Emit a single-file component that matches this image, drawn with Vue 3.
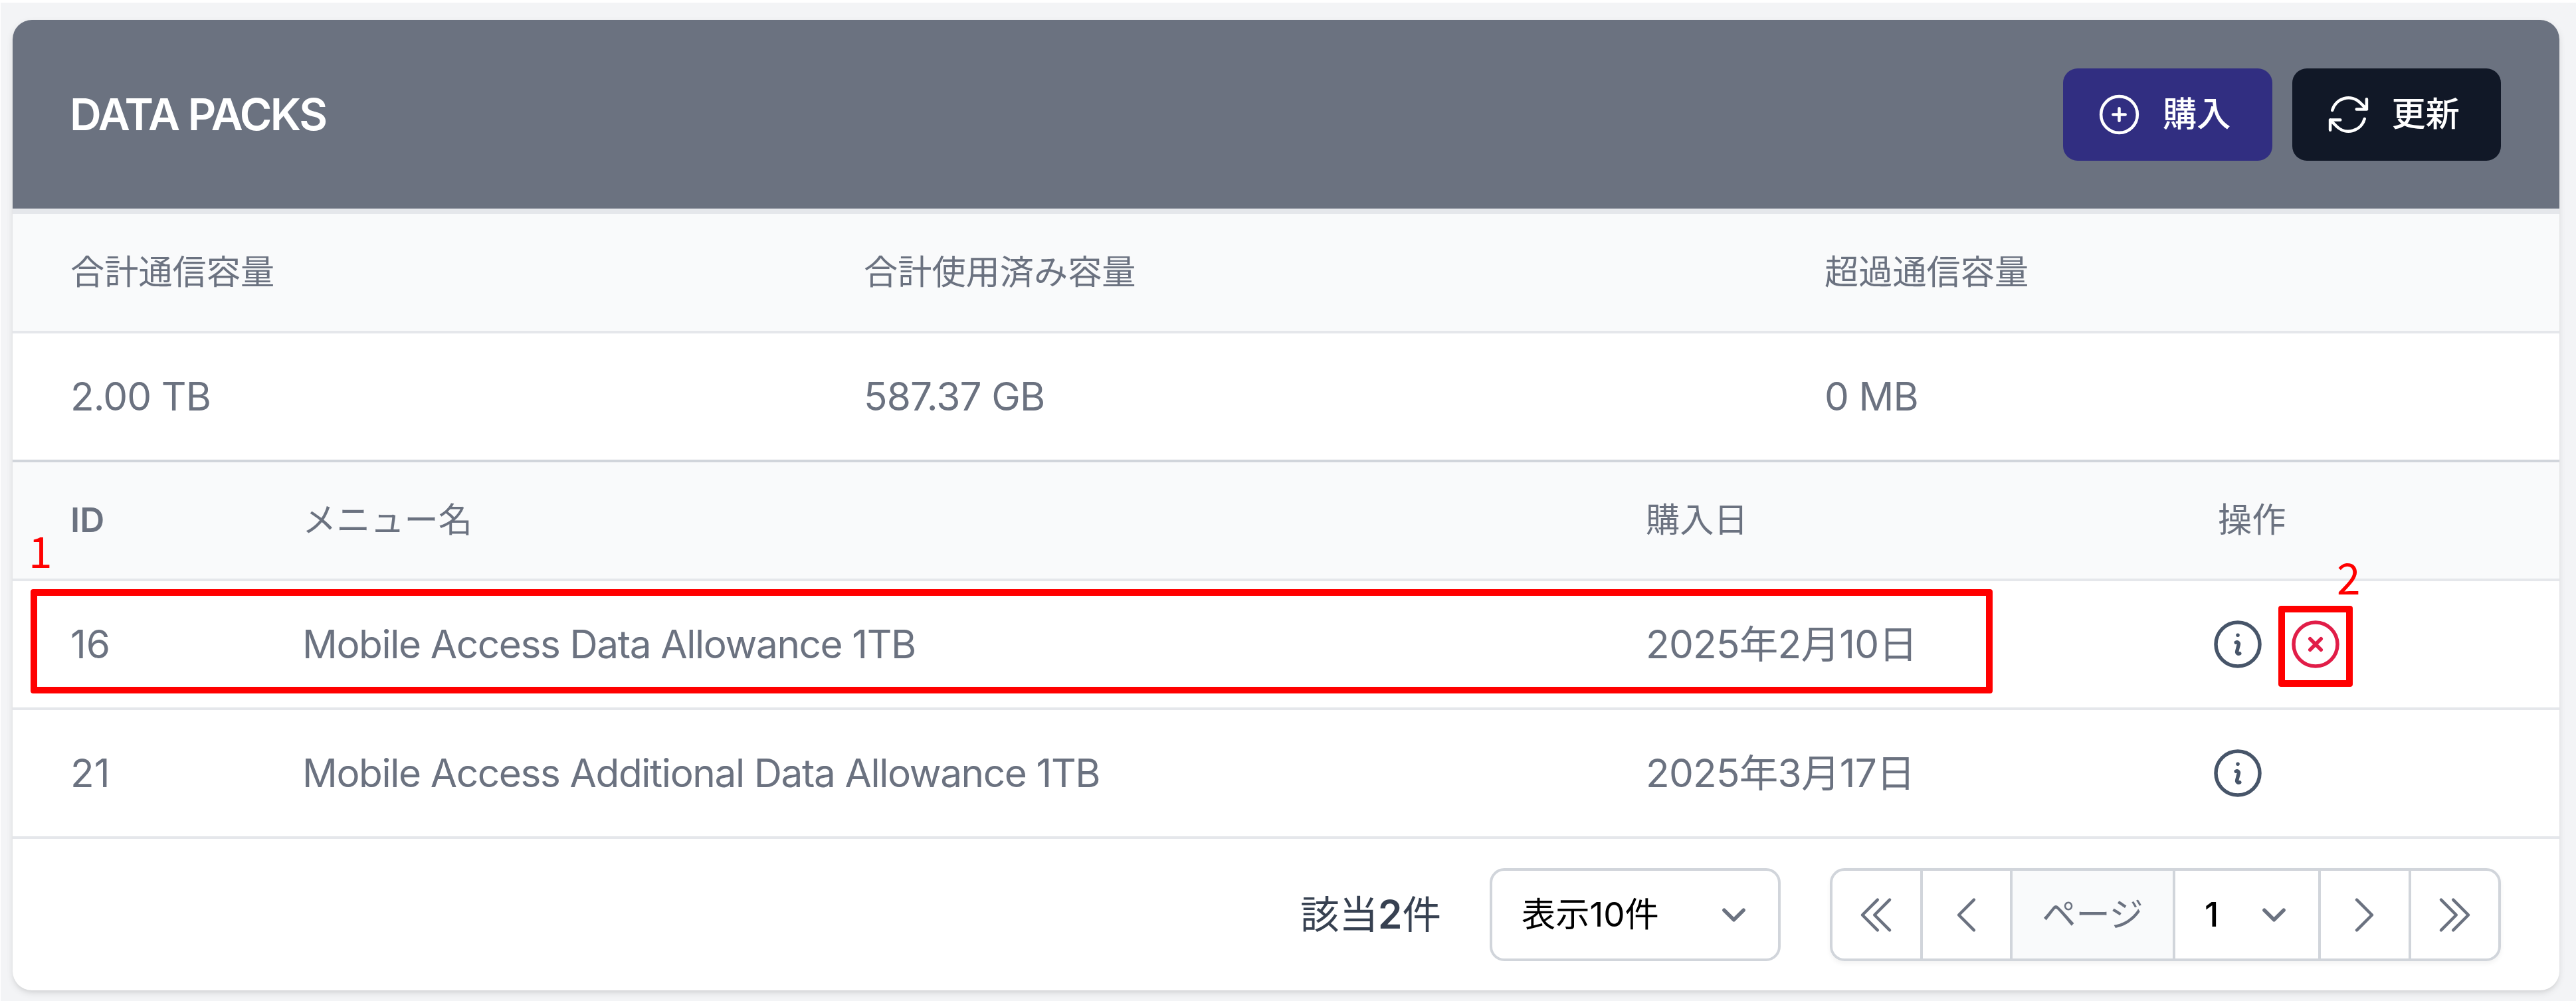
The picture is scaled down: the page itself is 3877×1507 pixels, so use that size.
<template>
  <div class="page">
    <div class="card">
      <!-- ヘッダー -->
      <div class="card-header">
        <h2 class="title">DATA PACKS</h2>
        <div class="actions">
          <button class="btn btn-buy">
            <svg class="btn-icon" viewBox="0 0 24 24"><path :d="icons.plus" /></svg>
            <span>購入</span>
          </button>
          <button class="btn btn-refresh">
            <svg class="btn-icon" viewBox="0 0 24 24"><path :d="icons.refresh" /></svg>
            <span>更新</span>
          </button>
        </div>
      </div>

      <!-- 通信容量の合計 -->
      <div class="row summary head">
        <div v-for="item in summary" :key="item.label">{{ item.label }}</div>
      </div>
      <div class="row summary body summary-last">
        <div v-for="item in summary" :key="item.label">{{ item.value }}</div>
      </div>

      <!-- データパック一覧 -->
      <div class="row packs head">
        <div class="latin">ID</div>
        <div>メニュー名</div>
        <div>購入日</div>
        <div>操作</div>
      </div>
      <div class="row packs body" v-for="pack in packs" :key="pack.id">
        <div class="pack-id">{{ pack.id }}</div>
        <div class="menu-name">{{ pack.name }}</div>
        <div class="date">{{ pack.date }}</div>
        <div class="ops">
          <svg class="op-icon" viewBox="0 0 24 24"><path :d="icons.info" /></svg>
          <svg v-if="pack.cancelable" class="op-icon op-cancel" viewBox="0 0 24 24"><path :d="icons.cancel" /></svg>
        </div>
      </div>

      <!-- ページネーション -->
      <div class="card-footer">
        <div class="total">該当<b>{{ packs.length }}</b>件</div>
        <div class="select per-page">
          <span>表示10件</span>
          <svg class="caret" viewBox="0 0 20 20"><path d="M6 8l4 4 4-4" /></svg>
        </div>
        <div class="pager">
          <div class="cell nav"><svg class="chevron" viewBox="0 0 24 24"><path :d="icons.first" /></svg></div>
          <div class="cell nav"><svg class="chevron" viewBox="0 0 24 24"><path :d="icons.prev" /></svg></div>
          <div class="cell page-label">ページ</div>
          <div class="cell page-select">
            <span>1</span>
            <svg class="caret" viewBox="0 0 20 20"><path d="M6 8l4 4 4-4" /></svg>
          </div>
          <div class="cell nav"><svg class="chevron" viewBox="0 0 24 24"><path :d="icons.next" /></svg></div>
          <div class="cell nav"><svg class="chevron" viewBox="0 0 24 24"><path :d="icons.last" /></svg></div>
        </div>
      </div>
    </div>

    <!-- 説明用の赤枠と番号 -->
    <div class="mark mark-row"></div>
    <div class="mark mark-cancel"></div>
    <div class="mark-no no-1">1</div>
    <div class="mark-no no-2">2</div>
  </div>
</template>

<script setup>
import { ref } from 'vue'

const summary = ref([
  { label: '合計通信容量', value: '2.00 TB' },
  { label: '合計使用済み容量', value: '587.37 GB' },
  { label: '超過通信容量', value: '0 MB' }
])

const packs = ref([
  { id: 16, name: 'Mobile Access Data Allowance 1TB', date: '2025年2月10日', cancelable: true },
  { id: 21, name: 'Mobile Access Additional Data Allowance 1TB', date: '2025年3月17日', cancelable: false }
])

// アイコンのパス（24x24、線のみ）
const icons = {
  plus: 'M12 9v6m3-3H9m12 0a9 9 0 1 1-18 0 9 9 0 0 1 18 0Z',
  refresh: 'M16.023 9.348h4.992v-.001M2.985 19.644v-4.992m0 0h4.992m-4.993 0 3.181 3.183a8.25 8.25 0 0 0 13.803-3.7M4.031 9.865a8.25 8.25 0 0 1 13.803-3.7l3.181 3.182m0-4.991v4.99',
  info: 'm11.25 11.25.041-.02a.75.75 0 0 1 1.063.852l-.708 2.836a.75.75 0 0 0 1.063.853l.041-.021M21 12a9 9 0 1 1-18 0 9 9 0 0 1 18 0Zm-9-3.75h.008v.008H12V8.25Z',
  cancel: 'm9.75 9.75 4.5 4.5m0-4.5-4.5 4.5M21 12a9 9 0 1 1-18 0 9 9 0 0 1 18 0Z',
  first: 'm18.75 4.5-7.5 7.5 7.5 7.5m-6-15L5.25 12l7.5 7.5',
  prev: 'M15.75 19.5 8.25 12l7.5-7.5',
  next: 'm8.25 4.5 7.5 7.5-7.5 7.5',
  last: 'm5.25 4.5 7.5 7.5-7.5 7.5m6-15 7.5 7.5-7.5 7.5'
}
</script>

<style>
body {
  margin: 0;
  background: #fff;
}
</style>

<style scoped>
.page {
  position: relative;
  box-sizing: border-box;
  width: 3877px;
  height: 1507px;
  padding: 26px 25px 15px 18px;
  border-top: 4px solid #fff;
  border-left: 1px solid #fff;
  background: #f3f4f6;
  font-family: Inter, "Noto Sans CJK JP", sans-serif;
  line-height: 1.4;
  color: #6b7280;
  overflow: hidden;
}

.card {
  display: flex;
  flex-direction: column;
  height: 1461px;
  border-radius: 29px;
  background: #fff;
  box-shadow: 0 4px 11px rgba(0, 0, 0, 0.1), 0 4px 7px -4px rgba(0, 0, 0, 0.1);
  overflow: hidden;
}

.card-header {
  display: flex;
  align-items: center;
  justify-content: space-between;
  box-sizing: border-box;
  height: 292px;
  padding: 0 88px 0 86px;
  border-bottom: 8px solid #e5e7eb;
  background: #6b7280;
}

.title {
  margin: 0;
  color: #fff;
  font-size: 66px;
  font-weight: 600;
  line-height: 100px;
  letter-spacing: -2.4px;
}

.actions {
  display: flex;
  gap: 30px;
}

.btn {
  display: flex;
  align-items: center;
  gap: 29px;
  box-sizing: border-box;
  width: 314.5px;
  height: 139px;
  padding: 0 0 0 48px;
  border: 0;
  border-radius: 22px;
  color: #fff;
  font-family: inherit;
  font-size: 51.2px;
  font-weight: 500;
  line-height: 1.4;
}

.btn-buy {
  background: #312e81;
}

.btn-refresh {
  background: #111827;
}

.btn-icon,
.op-icon,
.chevron,
.caret {
  flex: none;
  fill: none;
  stroke: currentColor;
  stroke-width: 1.5;
  stroke-linecap: round;
  stroke-linejoin: round;
}

.btn-icon,
.chevron,
.caret {
  width: 73px;
  height: 73px;
}

.row {
  display: grid;
  align-items: center;
  flex: none;
  box-sizing: border-box;
  padding-left: 87px;
  border-bottom: 4px solid #e5e7eb;
  white-space: nowrap;
}

.summary {
  grid-template-columns: 1194px 1446px 1fr;
}

.packs {
  grid-template-columns: 349px 2022px 861px 1fr;
}

.head {
  height: 179.5px;
  background: #f9fafb;
  font-size: 51.2px;
  font-weight: 400;
}

.latin {
  font-weight: 600;
}

.body {
  height: 194px;
  font-size: 58.5px;
  letter-spacing: -0.9px;
}

.pack-id {
  letter-spacing: 0;
}

.menu-name {
  letter-spacing: -1.4px;
}

.date {
  letter-spacing: -0.75px;
}

.summary-last {
  border-bottom-color: #d1d5db;
}

.ops {
  display: flex;
  gap: 29px;
  margin-left: -14px;
}

.op-icon {
  width: 88px;
  height: 88px;
  color: #475569;
}

.op-cancel {
  color: #e11d48;
}

.card-footer {
  display: flex;
  align-items: center;
  justify-content: flex-end;
  flex: 1;
  padding-right: 88px;
}

.total {
  margin-right: 73px;
  color: #374151;
  font-size: 58.5px;
}

.total b {
  font-weight: 600;
}

.select,
.pager {
  display: flex;
  align-items: center;
  box-sizing: border-box;
  height: 140px;
  border: 4px solid #d1d5db;
  border-radius: 22px;
  font-size: 51.2px;
}

.per-page {
  justify-content: space-between;
  width: 438px;
  margin-right: 74px;
  padding: 0 30px 0 44px;
  color: #000;
}

.caret {
  color: #6b7280;
}

.pager {
  width: 1010px;
  box-shadow: 0 4px 7px rgba(0, 0, 0, 0.05);
  overflow: hidden;
}

.cell {
  display: flex;
  align-items: center;
  justify-content: center;
  box-sizing: border-box;
  height: 100%;
  border-right: 4px solid #d1d5db;
}

.cell:last-child {
  border-right: 0;
}

.nav {
  flex: 1;
}

.page-label {
  width: 245px;
  background: #f9fafb;
}

.page-select {
  justify-content: space-between;
  width: 219px;
  padding: 0 30px 0 44px;
  color: #000;
  font-weight: 500;
}

/* 赤枠は表の上に重ねる */
.mark {
  position: absolute;
  box-sizing: border-box;
  border: 10px solid #f00;
  border-radius: 4px;
}

.mark-row {
  left: 45px;
  top: 883px;
  width: 2953px;
  height: 157px;
}

.mark-cancel {
  left: 3428px;
  top: 908px;
  width: 112px;
  height: 122px;
}

.mark-no {
  position: absolute;
  color: #f00;
  font-family: "Noto Sans CJK JP", sans-serif;
  font-size: 64px;
  font-weight: 400;
  line-height: 64px;
}

.no-1 {
  left: 42px;
  top: 791px;
}

.no-2 {
  left: 3516px;
  top: 831px;
}
</style>
